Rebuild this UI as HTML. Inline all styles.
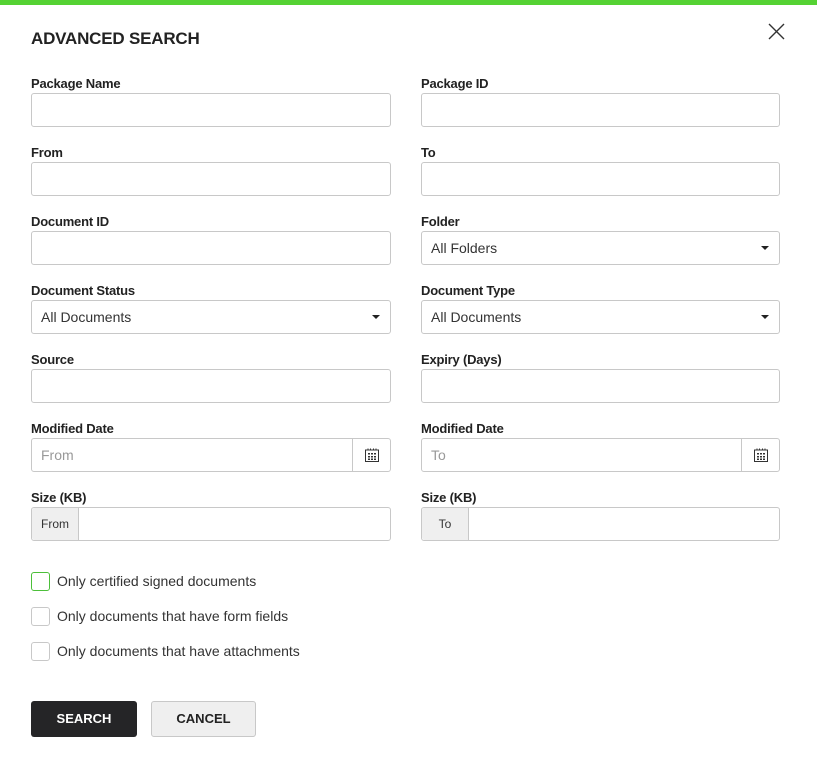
<!DOCTYPE html>
<html><head><meta charset="utf-8"><style>
*{box-sizing:border-box;margin:0;padding:0}
body{width:817px;height:759px;background:#fff;font-family:"Liberation Sans",Arial,sans-serif;color:#222;position:relative;overflow:hidden}
.bar{position:absolute;left:0;top:0;width:817px;height:5px;background:#55d233}
h1{position:absolute;left:31px;top:29px;font-size:17px;font-weight:bold;color:#222;letter-spacing:-0.2px}
.close{position:absolute;left:767px;top:22px}
.lbl{position:absolute;font-size:13px;font-weight:bold;color:#222;letter-spacing:-0.2px;margin-top:1px}
.in{position:absolute;width:360px;height:34px;border:1px solid #c8c8c8;border-radius:3px;background:#fff;font-size:14px;color:#333;padding:0 9px;line-height:32px}
.ph{color:#999}
.caret{position:absolute;right:10px;top:14px;width:0;height:0;border-left:4px solid transparent;border-right:4px solid transparent;border-top:4px solid #222}
.cal{position:absolute;right:0;top:0;width:38px;height:32px;border-left:1px solid #c8c8c8;display:flex;align-items:center;justify-content:center}
.addon{position:absolute;left:0;top:0;width:47px;height:32px;background:#efefef;border-right:1px solid #c8c8c8;font-size:12px;color:#333;text-align:center;line-height:32px;border-radius:3px 0 0 3px}
.cb{position:absolute;left:31px;width:19px;height:19px;border:1px solid #c8c8c8;border-radius:3px}
.cbl{position:absolute;left:57px;font-size:14px;color:#333}
.btn{position:absolute;top:701px;height:36px;border-radius:3px;font-size:13px;font-weight:bold;text-align:center;line-height:36px}
</style></head><body>
<div class="bar"></div>
<h1>ADVANCED SEARCH</h1>
<svg class="close" width="19" height="19" viewBox="0 0 19 19"><path d="M2 2L17 17M17 2L2 17" stroke="#333" stroke-width="1.4"/></svg>

<div class="lbl" style="left:31px;top:75px">Package Name</div>
<div class="in" style="left:31px;top:93px"></div>
<div class="lbl" style="left:421px;top:75px">Package ID</div>
<div class="in" style="left:421px;top:93px;width:359px"></div>

<div class="lbl" style="left:31px;top:144px">From</div>
<div class="in" style="left:31px;top:162px"></div>
<div class="lbl" style="left:421px;top:144px">To</div>
<div class="in" style="left:421px;top:162px;width:359px"></div>

<div class="lbl" style="left:31px;top:213px">Document ID</div>
<div class="in" style="left:31px;top:231px"></div>
<div class="lbl" style="left:421px;top:213px">Folder</div>
<div class="in" style="left:421px;top:231px;width:359px">All Folders<span class="caret"></span></div>

<div class="lbl" style="left:31px;top:282px">Document Status</div>
<div class="in" style="left:31px;top:300px">All Documents<span class="caret"></span></div>
<div class="lbl" style="left:421px;top:282px">Document Type</div>
<div class="in" style="left:421px;top:300px;width:359px">All Documents<span class="caret"></span></div>

<div class="lbl" style="left:31px;top:351px">Source</div>
<div class="in" style="left:31px;top:369px"></div>
<div class="lbl" style="left:421px;top:351px">Expiry (Days)</div>
<div class="in" style="left:421px;top:369px;width:359px"></div>

<div class="lbl" style="left:31px;top:420px">Modified Date</div>
<div class="in" style="left:31px;top:438px"><span class="ph">From</span><span class="cal"><svg width="14" height="14" viewBox="0 0 14 14"><rect x="0.5" y="2" width="13" height="11.5" fill="none" stroke="#333"/><path d="M3 0.5v2M5.5 0.5v2M8.5 0.5v2M11 0.5v2" stroke="#333"/><path d="M3 5h2v1.5H3zM6 5h2v1.5H6zM9 5h2v1.5H9zM3 8h2v1.5H3zM6 8h2v1.5H6zM9 8h2v1.5H9zM3 10.5h2V12H3zM6 10.5h2V12H6zM9 10.5h2V12H9z" fill="#333"/></svg></span></div>
<div class="lbl" style="left:421px;top:420px">Modified Date</div>
<div class="in" style="left:421px;top:438px;width:359px"><span class="ph">To</span><span class="cal"><svg width="14" height="14" viewBox="0 0 14 14"><rect x="0.5" y="2" width="13" height="11.5" fill="none" stroke="#333"/><path d="M3 0.5v2M5.5 0.5v2M8.5 0.5v2M11 0.5v2" stroke="#333"/><path d="M3 5h2v1.5H3zM6 5h2v1.5H6zM9 5h2v1.5H9zM3 8h2v1.5H3zM6 8h2v1.5H6zM9 8h2v1.5H9zM3 10.5h2V12H3zM6 10.5h2V12H6zM9 10.5h2V12H9z" fill="#333"/></svg></span></div>

<div class="lbl" style="left:31px;top:489px">Size (KB)</div>
<div class="in" style="left:31px;top:507px"><span class="addon">From</span></div>
<div class="lbl" style="left:421px;top:489px">Size (KB)</div>
<div class="in" style="left:421px;top:507px;width:359px"><span class="addon">To</span></div>

<div class="cb" style="top:572px;border-color:#4cbf3a"></div>
<div class="cbl" style="top:573px">Only certified signed documents</div>
<div class="cb" style="top:607px"></div>
<div class="cbl" style="top:608px">Only documents that have form fields</div>
<div class="cb" style="top:642px"></div>
<div class="cbl" style="top:643px">Only documents that have attachments</div>

<div class="btn" style="left:31px;width:106px;background:#252527;color:#fff">SEARCH</div>
<div class="btn" style="left:151px;width:105px;background:#efefef;border:1px solid #c8c8c8;color:#222;line-height:34px">CANCEL</div>
</body></html>
